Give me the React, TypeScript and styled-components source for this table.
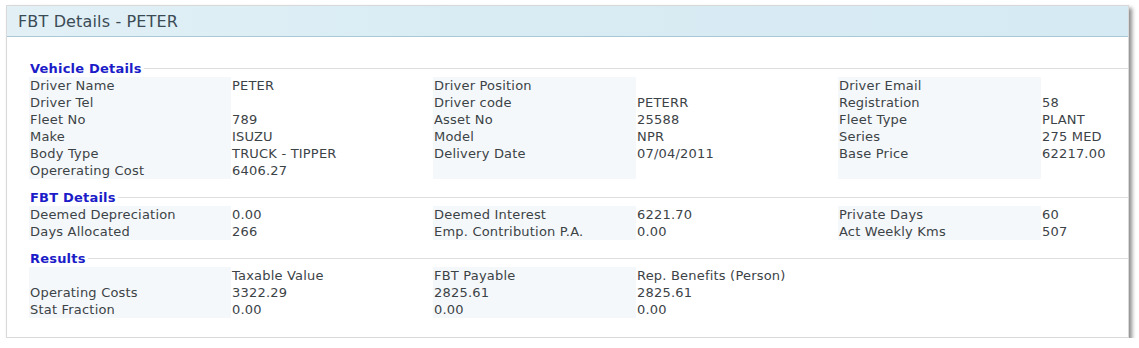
import React from "react";
import styled, { createGlobalStyle } from "styled-components";

type Cell = { text: string; label?: boolean };

const vehicleRows: Cell[][] = [
  [{ text: "Driver Name", label: true }, { text: "PETER" }, { text: "Driver Position", label: true }, { text: "" }, { text: "Driver Email", label: true }, { text: "" }],
  [{ text: "Driver Tel", label: true }, { text: "" }, { text: "Driver code", label: true }, { text: "PETERR" }, { text: "Registration", label: true }, { text: "58" }],
  [{ text: "Fleet No", label: true }, { text: "789" }, { text: "Asset No", label: true }, { text: "25588" }, { text: "Fleet Type", label: true }, { text: "PLANT" }],
  [{ text: "Make", label: true }, { text: "ISUZU" }, { text: "Model", label: true }, { text: "NPR" }, { text: "Series", label: true }, { text: "275 MED" }],
  [{ text: "Body Type", label: true }, { text: "TRUCK - TIPPER" }, { text: "Delivery Date", label: true }, { text: "07/04/2011" }, { text: "Base Price", label: true }, { text: "62217.00" }],
  [{ text: "Opererating Cost", label: true }, { text: "6406.27" }, { text: "", label: true }, { text: "" }, { text: "", label: true }, { text: "" }],
];

const fbtRows: Cell[][] = [
  [{ text: "Deemed Depreciation", label: true }, { text: "0.00" }, { text: "Deemed Interest", label: true }, { text: "6221.70" }, { text: "Private Days", label: true }, { text: "60" }],
  [{ text: "Days Allocated", label: true }, { text: "266" }, { text: "Emp. Contribution P.A.", label: true }, { text: "0.00" }, { text: "Act Weekly Kms", label: true }, { text: "507" }],
];

// results table only has 4 columns, the rest of the row stays blank
const resultRows: Cell[][] = [
  [{ text: "", label: true }, { text: "Taxable Value" }, { text: "FBT Payable", label: true }, { text: "Rep. Benefits (Person)" }],
  [{ text: "Operating Costs", label: true }, { text: "3322.29" }, { text: "2825.61", label: true }, { text: "2825.61" }],
  [{ text: "Stat Fraction", label: true }, { text: "0.00" }, { text: "0.00", label: true }, { text: "0.00" }],
];

function App() {
  return (
    <>
      <GlobalStyle />
      <Panel>
        <Header>FBT Details - PETER</Header>
        <Body>
          <Section title="Vehicle Details" rows={vehicleRows} />
          <Section title="FBT Details" rows={fbtRows} />
          <Section title="Results" rows={resultRows} />
        </Body>
      </Panel>
    </>
  );
}

function Section({ title, rows }: { title: string; rows: Cell[][] }) {
  return (
    <SectionBox>
      <Legend>{title}</Legend>
      <Grid>
        {rows.map((row, r) => (
          <Row key={r}>
            {row.map((c, i) => (
              <GridCell key={i} $label={!!c.label}>
                {c.text}
              </GridCell>
            ))}
          </Row>
        ))}
      </Grid>
    </SectionBox>
  );
}

export default App;

const GlobalStyle = createGlobalStyle`
  body {
    margin: 0;
    background: #ffffff;
    font-family: "DejaVu Sans", Verdana, sans-serif;
  }
`;

const Panel = styled.div`
  margin: 5px 0 0 6px;
  width: 1123px;
  height: 333px;
  box-sizing: border-box;
  border: 1px solid #d9d9d9;
  background: #ffffff;
  box-shadow: 3px 3px 4px rgba(0, 0, 0, 0.45);
`;

const Header = styled.div`
  height: 31px;
  box-sizing: border-box;
  padding-left: 11px;
  display: flex;
  align-items: center;
  font-size: 16px;
  letter-spacing: 0.15px;
  color: #3b4b55;
  background: linear-gradient(to right, #e2f0f6 0%, #d9ecf4 40%, #d6eaf3 100%);
  border-bottom: 1px solid #a9c9d6;
`;

const Body = styled.div`
  padding: 23px 0 0 22px;
  display: flex;
  flex-direction: column;
  gap: 10px;
`;

const SectionBox = styled.div`
  display: flex;
  flex-direction: column;
`;

const Legend = styled.div`
  height: 17px;
  display: flex;
  align-items: center;
  padding-left: 1px;
  font-size: 13px;
  font-weight: bold;
  letter-spacing: 0.2px;
  color: #1c1cc8;

  &::after {
    content: "";
    flex: 1;
    height: 1px;
    margin-left: 2px;
    background: #dedede;
  }
`;

const Grid = styled.div`
  display: flex;
  flex-direction: column;
`;

const Row = styled.div`
  display: grid;
  grid-template-columns: 202px 202px 203px 202px 203px 1fr;
  height: 17px;
`;

const GridCell = styled.div<{ $label: boolean }>`
  padding-left: 1px;
  font-size: 13px;
  line-height: 17px;
  letter-spacing: 0.2px;
  white-space: nowrap;
  color: #3c4347;
  background: ${(p) => (p.$label ? "#f5f8fa" : "#ffffff")};
`;
